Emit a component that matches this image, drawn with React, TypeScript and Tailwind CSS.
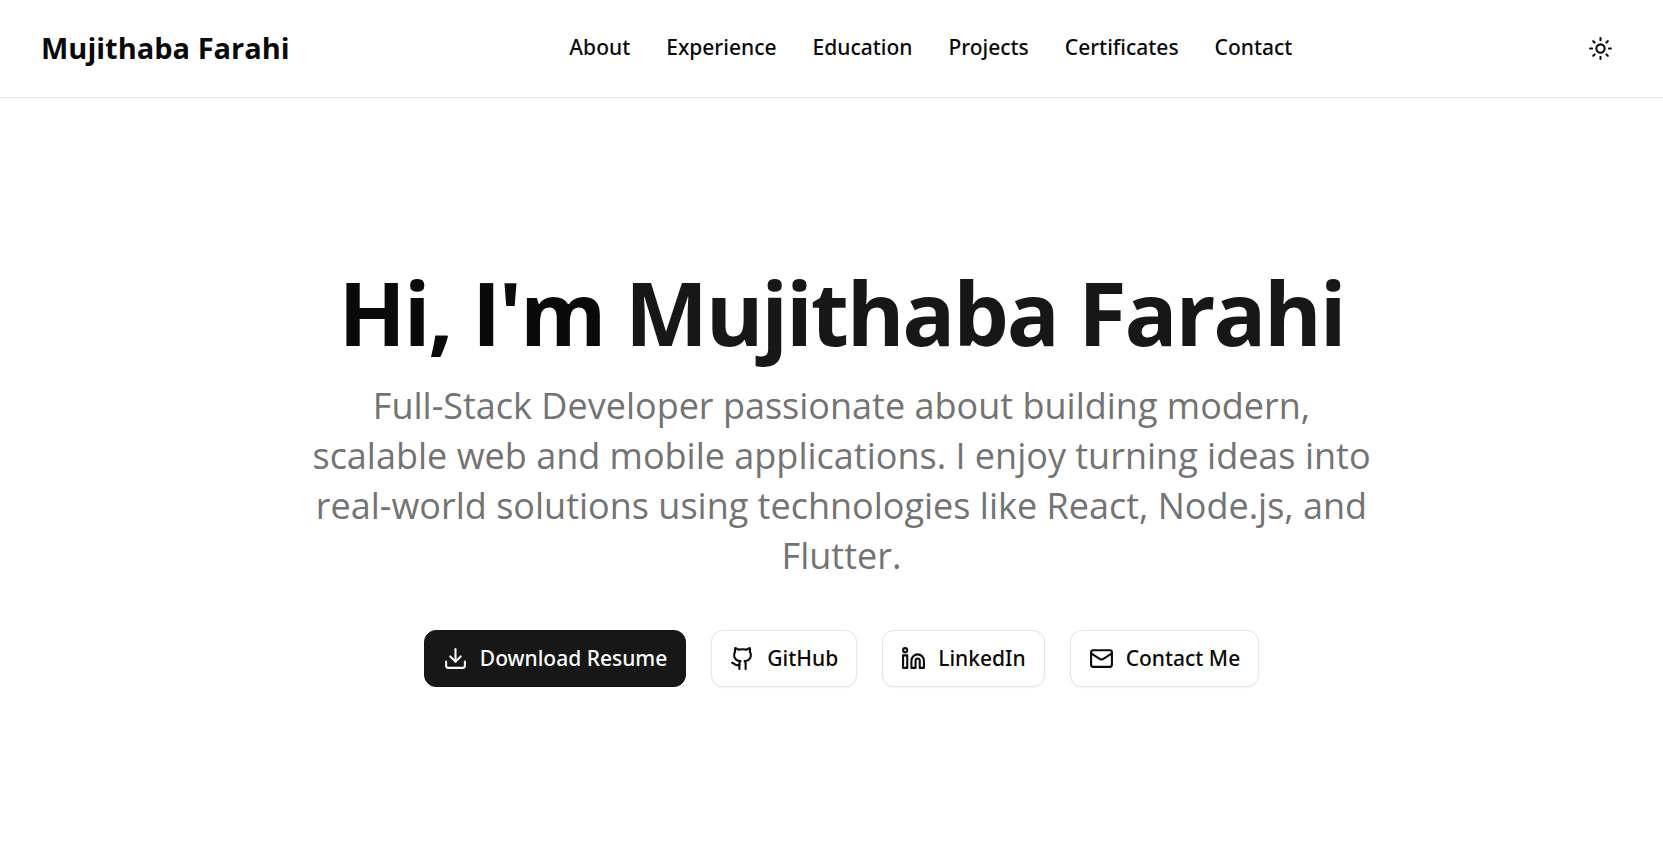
import type { ReactNode } from "react";
import { Download, Github, Linkedin, Mail, Sun } from "lucide-react";

const navItems = ["About", "Experience", "Education", "Projects", "Certificates", "Contact"];

function ActionLink({ href, icon, children, primary = false }: { href: string; icon: ReactNode; children: ReactNode; primary?: boolean }) {
  return (
    <a
      href={href}
      className={
        "flex h-[57px] items-center gap-3 rounded-xl border px-[18px] font-['Noto_Sans',sans-serif] text-[21px] font-medium whitespace-nowrap " +
        (primary
          ? "border-[#171717] bg-[#171717] text-[#fafafa] hover:bg-neutral-800"
          : "border-[#e5e5e5] bg-white text-[#0a0a0a] shadow-xs hover:bg-neutral-100")
      }
    >
      {icon}
      {children}
    </a>
  );
}

export default function App() {
  return (
    <div className="min-h-screen bg-white font-['Open_Sans',sans-serif] text-[#0a0a0a]">
      <header className="border-b border-[#e5e5e5]">
        <div className="flex h-[97px] items-center justify-between pr-[35px] pb-px pl-[41px]">
          <a href="#top" className="text-[29px] font-bold whitespace-nowrap">Mujithaba Farahi</a>
          <nav aria-label="Main">
            <ul className="flex gap-9">
              {navItems.map((item) => (
                <li key={item}>
                  <a href={"#" + item.toLowerCase()} className="font-['Noto_Sans',sans-serif] text-[21px] font-medium hover:underline">{item}</a>
                </li>
              ))}
            </ul>
          </nav>
          <button type="button" aria-label="Toggle theme" className="flex size-14 items-center justify-center rounded-xl hover:bg-neutral-100">
            <Sun size={25} />
          </button>
        </div>
      </header>
      <main id="top" className="flex flex-col items-center pt-[167px] pb-[140px] pl-5 text-center">
        <h1 className="text-[88px] leading-[94px] font-bold tracking-tight">
          Hi, I'm <span className="text-[#171717]">Mujithaba Farahi</span>
        </h1>
        <p className="mt-[22px] max-w-[1060px] text-[36px] leading-[50px] text-[#737373]">
          Full-Stack Developer passionate about building modern, scalable web and mobile applications. I enjoy turning
          ideas into real-world solutions using technologies like React, Node.js, and Flutter.
        </p>
        <div className="mt-[49px] flex flex-wrap justify-center gap-[25px]">
          <ActionLink href="#resume" primary icon={<Download size={25} />}>Download Resume</ActionLink>
          <ActionLink href="#github" icon={<Github size={25} />}>GitHub</ActionLink>
          <ActionLink href="#linkedin" icon={<Linkedin size={25} />}>LinkedIn</ActionLink>
          <ActionLink href="#contact" icon={<Mail size={25} />}>Contact Me</ActionLink>
        </div>
      </main>
    </div>
  );
}
